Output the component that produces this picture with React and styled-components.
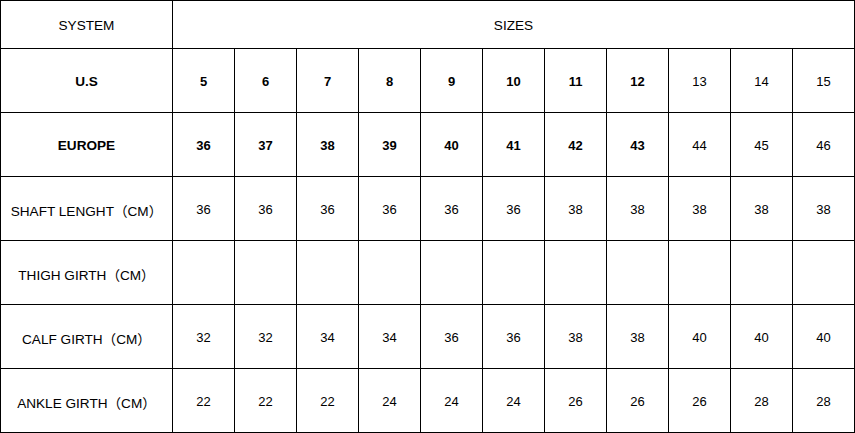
import React from "react"
import styled, { createGlobalStyle } from "styled-components"

const GlobalStyle = createGlobalStyle`
  html, body {
    margin: 0;
    padding: 0;
    background: #fff;
  }
  body {
    font-family: "Liberation Sans", "Noto Sans CJK SC", Arial, sans-serif;
    color: #000;
  }
`

const sizes = {
  us: ["5", "6", "7", "8", "9", "10", "11", "12", "13", "14", "15"],
  eu: ["36", "37", "38", "39", "40", "41", "42", "43", "44", "45", "46"],
}

const rows = [
  { label: "SHAFT LENGHT（CM）", values: ["36", "36", "36", "36", "36", "36", "38", "38", "38", "38", "38"] },
  { label: "THIGH GIRTH（CM）", values: Array(11).fill("") },
  { label: "CALF GIRTH（CM）", values: ["32", "32", "34", "34", "36", "36", "38", "38", "40", "40", "40"] },
  { label: "ANKLE GIRTH（CM）", values: ["22", "22", "22", "24", "24", "24", "26", "26", "26", "28", "28"] },
]

// only the first eight sizes are set in bold in the chart
const BOLD_COUNT = 8

const Chart = () => (
  <Grid>
    <Cell $label>SYSTEM</Cell>
    <Cell $label $span={11}>SIZES</Cell>

    <Cell $label $bold>U.S</Cell>
    {sizes.us.map((s, i) => (
      <Cell key={`us-${i}`} $bold={i < BOLD_COUNT}>{s}</Cell>
    ))}

    <Cell $label $bold>EUROPE</Cell>
    {sizes.eu.map((s, i) => (
      <Cell key={`eu-${i}`} $bold={i < BOLD_COUNT}>{s}</Cell>
    ))}

    {rows.map(row => (
      <React.Fragment key={row.label}>
        <Cell $label>{row.label}</Cell>
        {row.values.map((v, i) => (
          <Cell key={i}>{v}</Cell>
        ))}
      </React.Fragment>
    ))}
  </Grid>
)

const Grid = styled.div`
  display: grid;
  grid-template-columns: 172px repeat(11, 62px);
  grid-template-rows: 48px repeat(6, 64px);
  width: 855px;
  box-sizing: border-box;
  border-top: 1px solid #000;
  border-left: 1px solid #000;
`

const Cell = styled.div`
  grid-column: span ${p => p.$span || 1};
  display: flex;
  align-items: center;
  justify-content: center;
  box-sizing: border-box;
  padding-top: 2px;
  border-right: 1px solid #000;
  border-bottom: 1px solid #000;
  font-size: ${p => (p.$label ? "13.6px" : "13px")};
  font-weight: ${p => (p.$bold ? 700 : 400)};
  white-space: nowrap;
  color: #000;
`

const App = () => (
  <>
    <GlobalStyle />
    <Chart />
  </>
)

export default App
